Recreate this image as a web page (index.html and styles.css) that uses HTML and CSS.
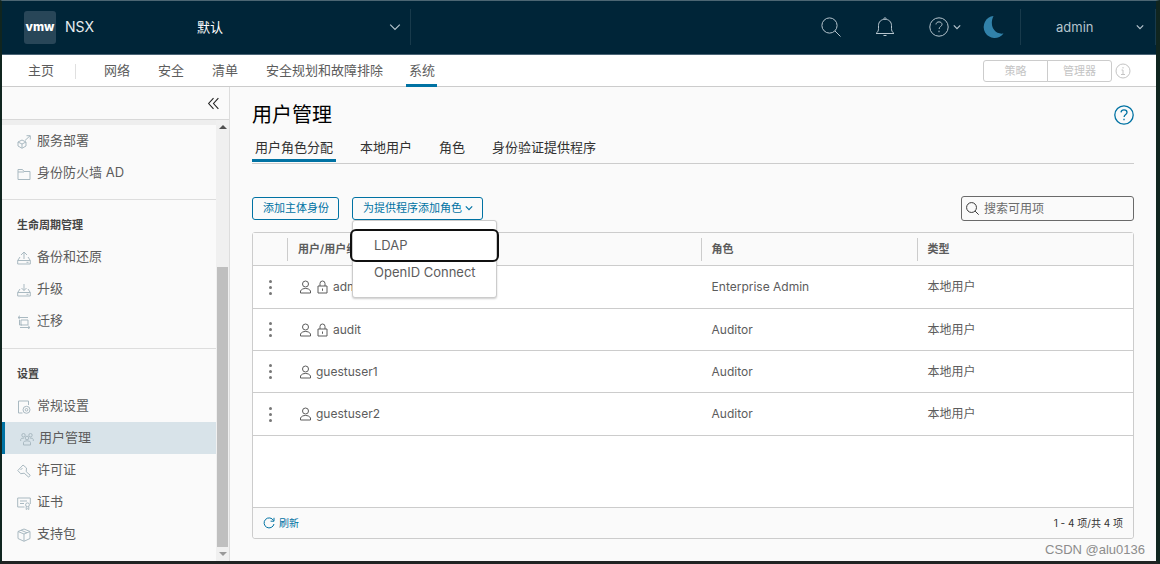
FILE: index.html
```html
<!DOCTYPE html>
<html lang="zh-CN">
<head>
<meta charset="utf-8">
<title>NSX</title>
<link rel="stylesheet" href="styles.css">
</head>
<body>
<svg class="defs" aria-hidden="true">
  <symbol id="search" viewBox="0 0 20 20"><circle cx="8.5" cy="8.5" r="7.6"/><path d="M14 14l5.5 5.5"/></symbol>
  <symbol id="chevron" viewBox="0 0 10 10"><path d="M1 3l4 4 4-4"/></symbol>
  <symbol id="help" viewBox="0 0 20 20"><circle cx="10" cy="10" r="9.2"/><path d="M7 7.4C7.2 5.6 8.400 4.900 10 4.900s3 .9 3 2.500c0 2.100-2.900 2.100-2.900 4.600M10 13.700v1.500"/></symbol>
  <symbol id="user" viewBox="0 0 12 14"><circle cx="6" cy="4" r="3"/><path d="M1 13v-2c1-2 3-2.500 5-2.500s4 .5 5 2.500v2z"/></symbol>
  <symbol id="lock" viewBox="0 0 12 14"><path d="M1.500 6h9v7h-9zM3.500 6V3.500a2.500 2.500 0 0 1 5 0V6M6 8.500v2.300"/></symbol>
  <symbol id="tray" viewBox="0 0 14 14"><path d="M3 6L.7 9.500V13h12.600V9.500L11 6M.7 9.500h12.600M9.500 11.300h2"/></symbol>
</svg>
<div class="app">
  <header class="topbar">
    <div class="logo">vmw</div>
    <span class="product">NSX</span>
    <div class="scope">
      <select aria-label="范围"><option>默认</option></select>
      <svg class="scope-arrow"><use href="#chevron"/></svg>
    </div>
    <div class="tools">
      <button aria-label="搜索"><svg class="i20"><use href="#search"/></svg></button>
      <button aria-label="通知"><svg class="i20" viewBox="0 0 20 20"><path d="M1 16.500h18c-2-1.500-2.500-3-2.500-5V8.500C16.500 5 14 2.300 10 2.300S3.500 5 3.500 8.500v3c0 2-.5 3.500-2.500 5zM8.700 2.300c0-2 2.600-2 2.600 0M8.500 18.500h3"/></svg></button>
      <button aria-label="帮助"><svg class="i20"><use href="#help"/></svg><svg class="i8"><use href="#chevron"/></svg></button>
      <button aria-label="深色主题"><svg class="moon" viewBox="0 0 22 22"><path d="M11.500 0A11 11 0 1 0 21.500 17.500C12 19 7 9 11.500 0z"/></svg></button>
    </div>
    <button class="account"><span>admin</span><svg class="i8"><use href="#chevron"/></svg></button>
  </header>

  <nav class="mainnav">
    <a href="#" class="home">主页</a>
    <a href="#">网络</a>
    <a href="#">安全</a>
    <a href="#">清单</a>
    <a href="#">安全规划和故障排除</a>
    <a href="#" class="active">系统</a>
    <div class="mode">
      <button disabled>策略</button><button disabled>管理器</button>
      <svg class="info" viewBox="0 0 16 16"><circle cx="8" cy="8" r="7"/><path d="M6.500 7H8v4.500M6 11.500h4M8 4v1.500"/></svg>
    </div>
  </nav>

  <div class="body">
    <aside class="sidebar">
      <div class="side-head"><button aria-label="折叠"><svg viewBox="0 0 12 12"><path d="M6 1L1.500 6 6 11M10.500 1L6 6l4.500 5"/></svg></button></div>
      <div class="side-scroll">
        <div class="side-list">
          <section>
            <a href="#"><svg viewBox="0 0 14 14"><path d="M5 5l4 2v4l-4 2.300L1 11V7zM1 7l4 2 4-2M5 9v4M8 5.500l5-4.700M9.500.7H13.300V4.500"/></svg>服务部署</a>
            <a href="#"><svg viewBox="0 0 14 14"><path d="M1 12.500V2.500h4.500l1.500 2h6v8zM1 5h6"/></svg>身份防火墙 AD</a>
          </section>
          <section>
            <h2>生命周期管理</h2>
            <a href="#"><svg viewBox="0 0 14 14"><use href="#tray"/><path d="M7 8V1.500M4 4l3-3 3 3"/></svg>备份和还原</a>
            <a href="#"><svg viewBox="0 0 14 14"><use href="#tray"/><path d="M7 1v6.500M4.500 5L7 7.500 9.500 5"/></svg>升级</a>
            <a href="#"><svg viewBox="0 0 14 14"><path d="M4 5h7v5H4zM1 2.500h10M3 .7L1 2.500l2 1.800M2.500 5v5H5M3 12.500h10M11 10.700l2 1.800-2 1.500"/></svg>迁移</a>
          </section>
          <section>
            <h2>设置</h2>
            <a href="#"><svg viewBox="0 0 14 14"><path d="M5.500 13H1.500V1h10v4"/><circle cx="9.500" cy="9.800" r="3.500"/><circle cx="9.500" cy="9.800" r="1.300"/></svg>常规设置</a>
            <a href="#" class="active"><svg viewBox="0 0 14 14"><circle cx="3.500" cy="3.200" r="1.700"/><circle cx="10.500" cy="3.200" r="1.700"/><circle cx="7" cy="6" r="1.800"/><path d="M3.500 13v-2.500q0-1.700 3.500-1.700t3.500 1.700V13zM.7 9V7.500Q.7 6 4 6M13.300 9V7.500Q13.300 6 10 6"/></svg>用户管理</a>
            <a href="#"><svg viewBox="0 0 14 14"><path d="M.8 6.500L6 1l3.500 3-.3 3.700 4 3.500-1.500 2-4.500-4-3.500.5zM3.500 6l2-2"/></svg>许可证</a>
            <a href="#"><svg viewBox="0 0 14 14"><path d="M7.500 11H.7V2h12.600v6M3 5h7M3 7.500h4"/><circle cx="10.500" cy="8.800" r="1.900"/><path d="M9.200 10.500V13.500l1.300-.8 1.300.8v-3"/></svg>证书</a>
            <a href="#"><svg viewBox="0 0 14 14"><path d="M7 1l6 2.500v7L7 13.300 1 10.500v-7zM1 3.500L7 6l6-2.500M7 6v7M4 2.200l6 2.600"/></svg>支持包</a>
          </section>
        </div>
        <div class="scrollbar" aria-hidden="true"><i class="up"></i><i class="thumb"></i><i class="down"></i></div>
      </div>
    </aside>

    <main>
      <div class="title"><h1>用户管理</h1><button aria-label="帮助"><svg class="i20"><use href="#help"/></svg></button></div>
      <div class="tabs">
        <a href="#" class="active">用户角色分配</a><a href="#">本地用户</a><a href="#">角色</a><a href="#">身份验证提供程序</a>
      </div>
      <div class="actions">
        <button class="btn">添加主体身份</button>
        <div class="dropdown">
          <button class="btn">为提供程序添加角色<svg class="i8"><use href="#chevron"/></svg></button>
          <div class="menu"><button class="focus">LDAP</button><button>OpenID Connect</button></div>
        </div>
        <label class="search"><svg><use href="#search"/></svg><input type="text" placeholder="搜索可用项" aria-label="搜索可用项"></label>
      </div>
      <div class="grid">
        <table>
          <colgroup><col class="c-menu"><col class="c-user"><col class="c-role"><col></colgroup>
          <thead><tr><th></th><th>用户/用户组</th><th>角色</th><th>类型</th></tr></thead>
          <tbody>
            <tr><td><button class="dots" aria-label="操作"><i></i><i></i><i></i></button></td><td><div class="who"><svg><use href="#user"/></svg><svg><use href="#lock"/></svg>admin</div></td><td>Enterprise Admin</td><td>本地用户</td></tr>
            <tr><td><button class="dots" aria-label="操作"><i></i><i></i><i></i></button></td><td><div class="who"><svg><use href="#user"/></svg><svg><use href="#lock"/></svg>audit</div></td><td>Auditor</td><td>本地用户</td></tr>
            <tr><td><button class="dots" aria-label="操作"><i></i><i></i><i></i></button></td><td><div class="who"><svg><use href="#user"/></svg>guestuser1</div></td><td>Auditor</td><td>本地用户</td></tr>
            <tr><td><button class="dots" aria-label="操作"><i></i><i></i><i></i></button></td><td><div class="who"><svg><use href="#user"/></svg>guestuser2</div></td><td>Auditor</td><td>本地用户</td></tr>
          </tbody>
        </table>
        <footer>
          <button class="refresh"><svg viewBox="0 0 12 12"><path d="M10.500 3.500A5 5 0 1 0 11 7M11 .8v3.400H7.600"/></svg>刷新</button>
          <span>1 - 4 项/共 4 项</span>
        </footer>
      </div>
    </main>
  </div>
  <div class="watermark">CSDN @alu0136</div>
</div>
</body>
</html>
```
FILE: styles.css
```css
* { box-sizing: border-box; }
body {
  margin: 0;
  background: #10251f;
  color: #5c5c5c;
  font: 13px/16px Inter, "Noto Sans CJK SC", sans-serif;
}
a { color: inherit; text-decoration: none; }
button {
  margin: 0;
  padding: 0;
  border: 0;
  background: none;
  color: inherit;
  font: inherit;
  display: flex;
  align-items: center;
}
svg { fill: none; stroke: currentColor; stroke-width: 1; flex: none; display: block; }
.defs { position: absolute; width: 0; height: 0; }
.i20 { width: 20px; height: 20px; }
.i8 { width: 8px; height: 8px; stroke-width: 1.5; }

.app {
  position: relative;
  display: flex;
  flex-direction: column;
  height: 100vh;
  border: solid #10251f;
  border-width: 1px 4px 3px 2px;
  border-top-color: #4c6673;
  border-bottom-color: #202423;
  background: #fafafa;
}

.topbar {
  display: flex;
  align-items: center;
  height: 54px;
  flex: none;
  padding-bottom: 1px;
  background: #002538;
  border-bottom: 1px solid #4a6475;
  color: #b5c4cd;
}
.logo {
  display: grid;
  place-items: center;
  width: 32px;
  height: 33px;
  margin-left: 22px;
  border-radius: 3px;
  background: #284658;
  color: #fff;
  font-size: 12px;
  font-weight: 800;
}
.product { width: 132px; margin-left: 9px; color: #e6ecef; font-size: 14px; }
.scope {
  display: flex;
  align-items: center;
  width: 214px;
  height: 36px;
  border-right: 1px solid #183a4b;
}
.scope select {
  flex: 1;
  padding: 0;
  border: 0;
  appearance: none;
  background: none;
  color: #fff;
  font: inherit;
}
.scope-arrow { width: 12px; height: 12px; margin-right: 9px; }
.tools { display: flex; align-items: center; gap: 34px; margin-left: auto; padding-right: 16px; }
.tools .i8 { margin-left: 4px; }
.tools button:last-child { margin-left: -13px; }
.moon { width: 22px; height: 22px; fill: #3182aa; stroke: none; }
.account {
  width: 136px;
  height: 36px;
  padding: 0 11px 0 35px;
  justify-content: space-between;
  border: solid #183a4b;
  border-width: 0 1px;
}

.mainnav {
  display: flex;
  align-items: stretch;
  gap: 28px;
  height: 32px;
  flex: none;
  padding: 0 25px 0 26px;
  border-bottom: 1px solid #ccc;
  background: #fff;
}
.mainnav a { padding-top: 7px; }
.mainnav .home { background: linear-gradient(#e0e0e0, #e0e0e0) right 9px / 1px 15px no-repeat; padding-right: 22px; }
.mainnav .active { margin: 0 0 -1px -5px; padding: 7px 2px 0 3px; border-bottom: 3px solid #0072a3; }
.mode { display: flex; align-items: center; margin-left: auto; font-size: 11px; color: #c4c4c4; }
.mode button { width: 65px; height: 22px; justify-content: center; border: 1px solid #ccc; border-radius: 3px 0 0 3px; }
.mode button + button { margin-left: -1px; border-radius: 0 3px 3px 0; }
.info { width: 16px; height: 16px; margin-left: 3px; }

.body { display: flex; flex: 1; min-height: 0; }
.sidebar { display: flex; flex-direction: column; width: 228px; flex: none; border-right: 1px solid #ddd; }
.side-head {
  display: flex;
  align-items: center;
  justify-content: flex-end;
  height: 33px;
  flex: none;
  padding-right: 9px;
  border-bottom: 1px solid #d8d8d8;
  color: #222;
}
.side-head svg { width: 13px; height: 13px; }
.side-scroll { display: flex; flex: 1; min-height: 0; }
.side-list { flex: 1; overflow: hidden; border-top: 5px solid #eee; }
.side-list section + section { border-top: 1px solid #ddd; }
.side-list section { padding-bottom: 11px; }
.side-list section:first-child { padding-bottom: 10px; }
.side-list h2 { margin: 0; padding: 17px 15px 8px; color: #454545; font-size: 11px; line-height: 16px; font-weight: 700; }
.side-list a { display: flex; align-items: center; gap: 6px; height: 32px; padding: 0 0 2px 15px; }
.side-list a svg { width: 14px; height: 14px; color: #a9b9c1; margin-top: 4px; }
.side-list .active { gap: 5px; border-left: 3px solid #0072a3; background: #d8e3e9; }
.scrollbar { display: flex; flex-direction: column; align-items: center; width: 13px; background: #f0f0f0; }
.scrollbar .up { margin-top: 5px; border: 4px solid transparent; border-top: 0; border-bottom-color: #505050; }
.scrollbar .thumb { width: 11px; flex: 1; margin-top: 138px; background: #bfbfbf; }
.scrollbar .down { margin: 5px 0; border: 4px solid transparent; border-bottom: 0; border-top-color: #999; }

main { display: flex; flex-direction: column; flex: 1; min-width: 0; padding: 14px 22px 22px; }
.title { display: flex; align-items: center; justify-content: space-between; }
.title h1 { margin: 0; color: #000; font-size: 20px; line-height: 28px; font-weight: 400; }
.title button { color: #0072a3; }
.title svg { stroke-width: 1.3; }
.tabs { display: flex; gap: 21px; border-bottom: 1px solid #ccc; color: #313131; }
.tabs a { height: 33px; padding: 10px 3px 0; margin-bottom: 1px; }
.tabs .active { border-bottom: 3px solid #0072a3; }
.actions { display: flex; align-items: center; gap: 13px; margin-top: 32px; margin-bottom: 11px; }
.btn { gap: 3px; height: 23px; padding: 0 9px 1px 10px; border: 1px solid #0072a3; border-radius: 3px; color: #0072a3; font-size: 11px; }
.dropdown { position: relative; }
.menu {
  position: absolute;
  z-index: 2;
  top: 23px;
  left: 0;
  width: 145px;
  padding: 11px 0;
  border: 1px solid #ccc;
  border-radius: 3px;
  background: #fff;
  box-shadow: 0 1px 2px rgba(0, 0, 0, .2);
}
.menu button { width: 100%; height: 27px; padding: 0 0 1px 21px; }
.menu .focus { outline: 2px solid #101010; outline-offset: 1px; border-radius: 3px; }
.search {
  display: flex;
  align-items: center;
  gap: 5px;
  width: 173px;
  height: 25px;
  margin-left: auto;
  padding: 0 4px;
  border: 1px solid #6a6a6a;
  border-radius: 3px;
}
.search svg { width: 13px; height: 13px; color: #333; stroke-width: 1.5; }
.search input { flex: 1; min-width: 0; padding: 0; border: 0; outline: 0; background: none; font: inherit; font-size: 12px; }
.search input::placeholder { color: #6c6c6c; }

.grid { display: flex; flex-direction: column; flex: 1; border: 1px solid #ccc; border-radius: 3px; background: #fff; }
table { width: 100%; table-layout: fixed; border-collapse: separate; border-spacing: 0; font-size: 12px; }
.c-menu { width: 34px; }
.c-user { width: 47%; }
.c-role { width: 216px; }
th { height: 33px; padding: 0 11px; border-bottom: 1px solid #ccc; background: #fafafa; text-align: left; font-size: 11px; font-weight: 600; }
th:not(:first-child) { background: linear-gradient(#ccc, #ccc) left 5px / 1px 23px no-repeat #fafafa; }
td { height: 42px; padding: 0 11px; border-bottom: 1px solid #ccc; }
tr:first-child td, tr:last-child td { height: 43px; }
.who { display: flex; align-items: center; gap: 4px; padding-left: 1px; }
.who svg { width: 13px; height: 14px; }
.dots { flex-direction: column; gap: 3px; margin-left: 5px; }
.dots i { width: 3px; height: 3px; border-radius: 50%; background: #777; }
footer {
  display: flex;
  align-items: center;
  justify-content: space-between;
  height: 31px;
  margin-top: auto;
  padding: 0 10px;
  border-top: 1px solid #ccc;
  border-radius: 0 0 3px 3px;
  background: #fafafa;
  color: #333;
  font-size: 10px;
}
.refresh { gap: 4px; color: #0072a3; }
.refresh svg { width: 12px; height: 12px; }
.watermark { position: absolute; right: 11px; bottom: 3px; color: #8c8c8c; font-family: "Liberation Sans", sans-serif; }
```
